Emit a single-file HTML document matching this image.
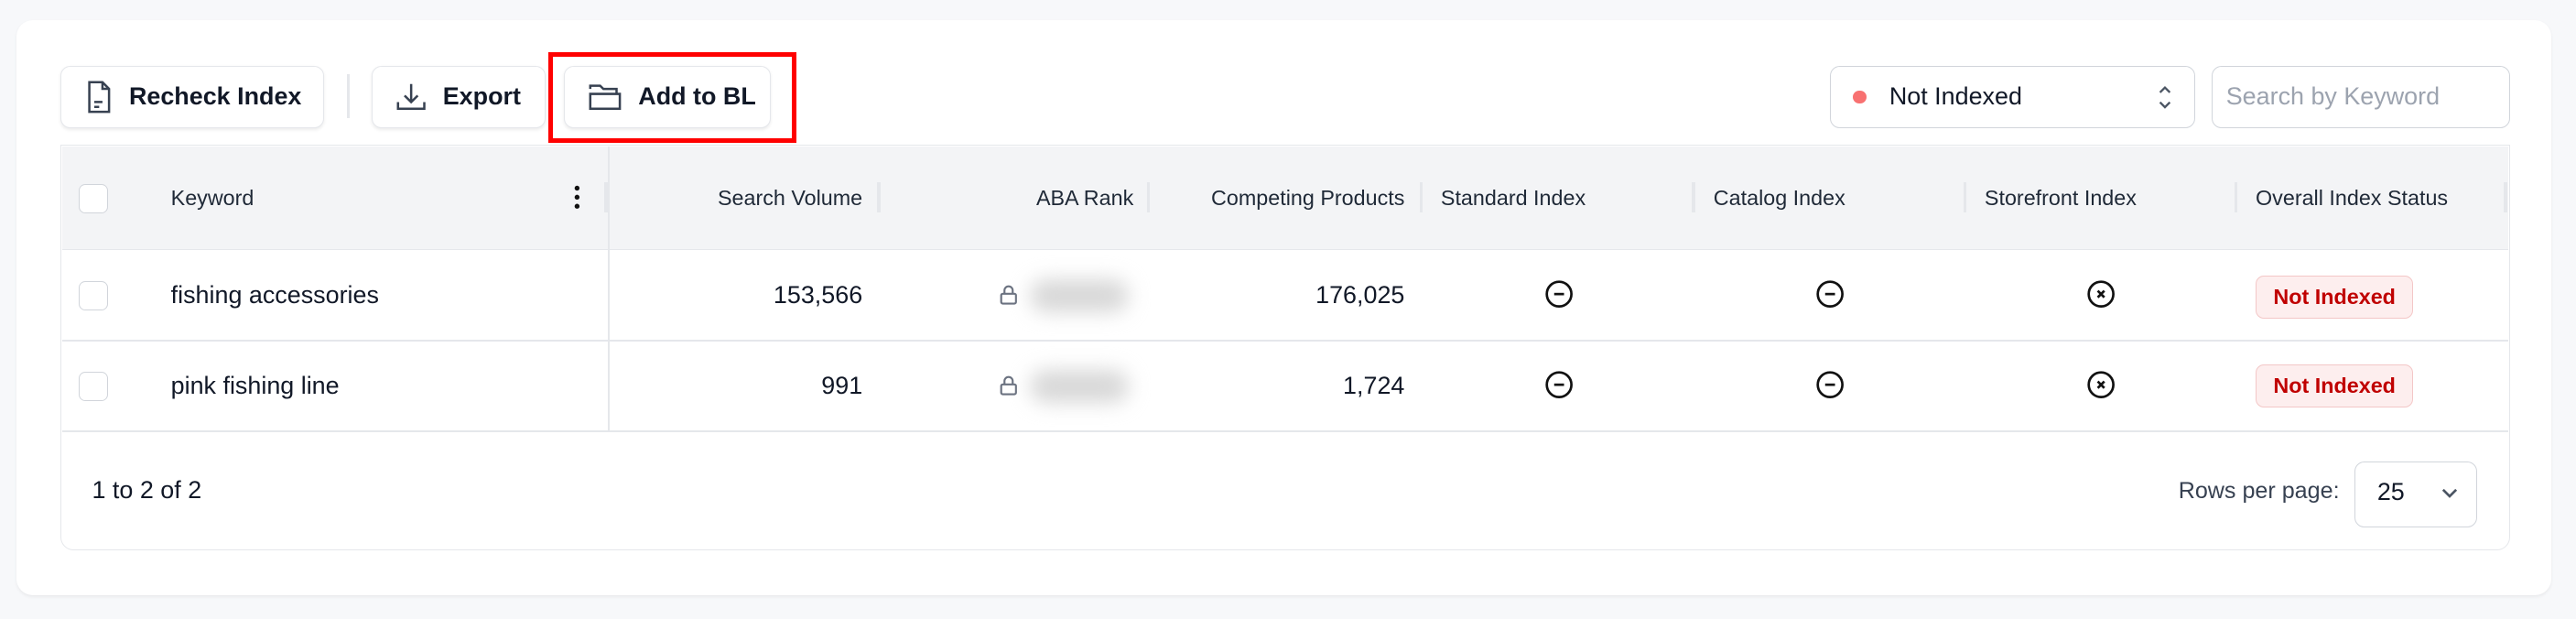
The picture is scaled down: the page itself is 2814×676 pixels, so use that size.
<!DOCTYPE html>
<html><head><meta charset="utf-8"><style>
*{box-sizing:border-box;margin:0;padding:0}
html,body{width:2814px;height:676px;overflow:hidden;background:#f7f8fa}
#w{zoom:1.79464;position:relative;width:1568px;height:377px;font-family:"Liberation Sans",sans-serif;color:#1f2937}
.a{position:absolute}
.card{left:10px;top:12px;width:1543px;height:350px;background:#fff;border-radius:10px;box-shadow:0 1px 2px rgba(0,0,0,.06)}
.btn{top:40px;height:38px;border:1px solid #e5e7eb;border-radius:6px;background:#fff;box-shadow:0 1px 2px rgba(0,0,0,.08);display:flex;align-items:center;font-size:15px;font-weight:bold;color:#111827}
.btn svg{margin:0 10px 0 15px}
.th{font-size:13px;color:#1f2937;top:113px}
.hs{width:2px;height:18px;background:#e5e7eb;top:111px}
.td{font-size:15px;color:#111827}
.r{text-align:right}
.cb{width:18px;height:18px;border:1px solid #d1d5db;border-radius:4px;background:#fff;left:48px}
.badge{left:1373px;width:96px;height:26px;border:1px solid #f3c7c7;background:#fdeeee;border-radius:5px;color:#c00000;font-size:13px;font-weight:bold;display:flex;align-items:center;justify-content:center}
.blur{width:60px;height:20px;background:#d8d8d8;border-radius:10px;filter:blur(6px)}
</style></head><body><div id="w">
<div class="a card"></div>
<div class="a btn" style="left:37px;width:160px"><svg width="16" height="20" viewBox="0 0 16 20" fill="none" stroke="#374151" stroke-width="1.4"><path d="M2 1h8l4 4v14H2z"/><path d="M10 1v4h4M5 13h5M5 16h3"/></svg>Recheck Index</div>
<div class="a" style="left:211px;top:45px;width:2px;height:27px;background:#e5e7eb"></div>
<div class="a btn" style="left:226px;width:106px"><svg width="18" height="18" viewBox="0 0 18 18" fill="none" stroke="#374151" stroke-width="1.4"><path d="M9 1v11M5 8l4 4 4-4M1 12v4h16v-4"/></svg>Export</div>
<div class="a btn" style="left:343px;width:126px"><svg width="20" height="18" viewBox="0 0 20 18" fill="none" stroke="#374151" stroke-width="1.4"><path d="M1 4V2h6l2 2h8v3M1 16V7h18v9z"/></svg>Add to BL</div>
<div class="a" style="left:334px;top:32px;width:151px;height:55px;border:3px solid #ff0000"></div>
<div class="a" style="left:1114px;top:40px;width:222px;height:38px;border:1px solid #d1d5db;border-radius:6px"></div>
<div class="a" style="left:1128px;top:55px;width:8px;height:8px;border-radius:50%;background:#f87171"></div>
<div class="a" style="left:1150px;top:50px;font-size:15px;color:#111827">Not Indexed</div>
<svg class="a" style="left:1313px;top:51px" width="10" height="16" viewBox="0 0 10 16" fill="none" stroke="#4b5563" stroke-width="1.3"><path d="M2 5l3-3 3 3M2 11l3 3 3-3"/></svg>
<div class="a" style="left:1346px;top:40px;width:182px;height:38px;border:1px solid #d1d5db;border-radius:6px"></div>
<div class="a" style="left:1355px;top:50px;font-size:15px;color:#9ca3af">Search by Keyword</div>
<div class="a" style="left:37px;top:88px;width:1491px;height:247px;border:1px solid #e5e7eb;border-radius:0 0 8px 8px"></div>
<div class="a" style="left:38px;top:89px;width:1489px;height:63px;background:#f3f4f6;border-bottom:1px solid #e5e7eb"></div>
<div class="a" style="left:38px;top:207px;width:1489px;height:1px;background:#e5e7eb"></div>
<div class="a" style="left:38px;top:262px;width:1489px;height:1px;background:#e5e7eb"></div>
<div class="a" style="left:370px;top:89px;width:1px;height:173px;background:#e5e7eb"></div>
<div class="a" style="left:368px;top:111px;width:2px;height:18px;background:#e5e7eb"></div>
<div class="a cb" style="top:112px"></div>
<div class="a th" style="left:104px">Keyword</div>
<svg class="a" style="left:348px;top:112px" width="6" height="16"><circle cx="3" cy="2.5" r="1.5" fill="#111"/><circle cx="3" cy="8" r="1.5" fill="#111"/><circle cx="3" cy="13.5" r="1.5" fill="#111"/></svg>
<div class="a th r" style="left:375px;width:150px">Search Volume</div>
<div class="a hs" style="left:534px"></div>
<div class="a th r" style="left:540px;width:150px">ABA Rank</div>
<div class="a hs" style="left:698px"></div>
<div class="a th r" style="left:700px;width:155px">Competing Products</div>
<div class="a hs" style="left:864px"></div>
<div class="a th" style="left:877px">Standard Index</div>
<div class="a hs" style="left:1030px"></div>
<div class="a th" style="left:1043px">Catalog Index</div>
<div class="a hs" style="left:1195px"></div>
<div class="a th" style="left:1208px">Storefront Index</div>
<div class="a hs" style="left:1360px"></div>
<div class="a th" style="left:1373px">Overall Index Status</div>
<div class="a hs" style="left:1524px"></div>

<div class="a cb" style="top:171px"></div>
<div class="a td" style="left:104px;top:171px">fishing accessories</div>
<div class="a td r" style="left:375px;width:150px;top:171px">153,566</div>
<div class="a td r" style="left:700px;width:155px;top:171px">176,025</div>
<div class="a cb" style="top:226px"></div>
<div class="a td" style="left:104px;top:226px">pink fishing line</div>
<div class="a td r" style="left:375px;width:150px;top:226px">991</div>
<div class="a td r" style="left:700px;width:155px;top:226px">1,724</div>

<svg class="a" style="left:608px;top:173px" width="12" height="13" viewBox="0 0 12 13" fill="none" stroke="#6b7280" stroke-width="1.2"><rect x="1.5" y="6" width="9" height="6" rx="1"/><path d="M3.5 6V4a2.5 2.5 0 015 0v2"/></svg>
<div class="a blur" style="left:627px;top:170px"></div>
<svg class="a" style="left:608px;top:228px" width="12" height="13" viewBox="0 0 12 13" fill="none" stroke="#6b7280" stroke-width="1.2"><rect x="1.5" y="6" width="9" height="6" rx="1"/><path d="M3.5 6V4a2.5 2.5 0 015 0v2"/></svg>
<div class="a blur" style="left:627px;top:225px"></div>

<svg class="a" style="left:940px;top:170px" width="18" height="18" fill="none" stroke="#111" stroke-width="1.5"><circle cx="9" cy="9" r="7.5"/><path d="M6 9h6"/></svg>
<svg class="a" style="left:1105px;top:170px" width="18" height="18" fill="none" stroke="#111" stroke-width="1.5"><circle cx="9" cy="9" r="7.5"/><path d="M6 9h6"/></svg>
<svg class="a" style="left:1270px;top:170px" width="18" height="18" fill="none" stroke="#111" stroke-width="1.5"><circle cx="9" cy="9" r="7.5"/><path d="M7 7l4 4M11 7l-4 4"/></svg>
<svg class="a" style="left:940px;top:225px" width="18" height="18" fill="none" stroke="#111" stroke-width="1.5"><circle cx="9" cy="9" r="7.5"/><path d="M6 9h6"/></svg>
<svg class="a" style="left:1105px;top:225px" width="18" height="18" fill="none" stroke="#111" stroke-width="1.5"><circle cx="9" cy="9" r="7.5"/><path d="M6 9h6"/></svg>
<svg class="a" style="left:1270px;top:225px" width="18" height="18" fill="none" stroke="#111" stroke-width="1.5"><circle cx="9" cy="9" r="7.5"/><path d="M7 7l4 4M11 7l-4 4"/></svg>
<div class="a badge" style="top:168px">Not Indexed</div>
<div class="a badge" style="top:222px">Not Indexed</div>

<div class="a" style="left:56px;top:290px;font-size:15px;color:#111827">1 to 2 of 2</div>
<div class="a r" style="left:1250px;width:174px;top:291px;font-size:14px;color:#374151">Rows per page:</div>
<div class="a" style="left:1433px;top:281px;width:75px;height:40px;border:1px solid #d1d5db;border-radius:6px"></div>
<div class="a" style="left:1447px;top:291px;font-size:15px;color:#111827">25</div>
<svg class="a" style="left:1486px;top:297px" width="10" height="7" fill="none" stroke="#4b5563" stroke-width="1.5"><path d="M1 1l4 4 4-4"/></svg>
</div></body></html>
